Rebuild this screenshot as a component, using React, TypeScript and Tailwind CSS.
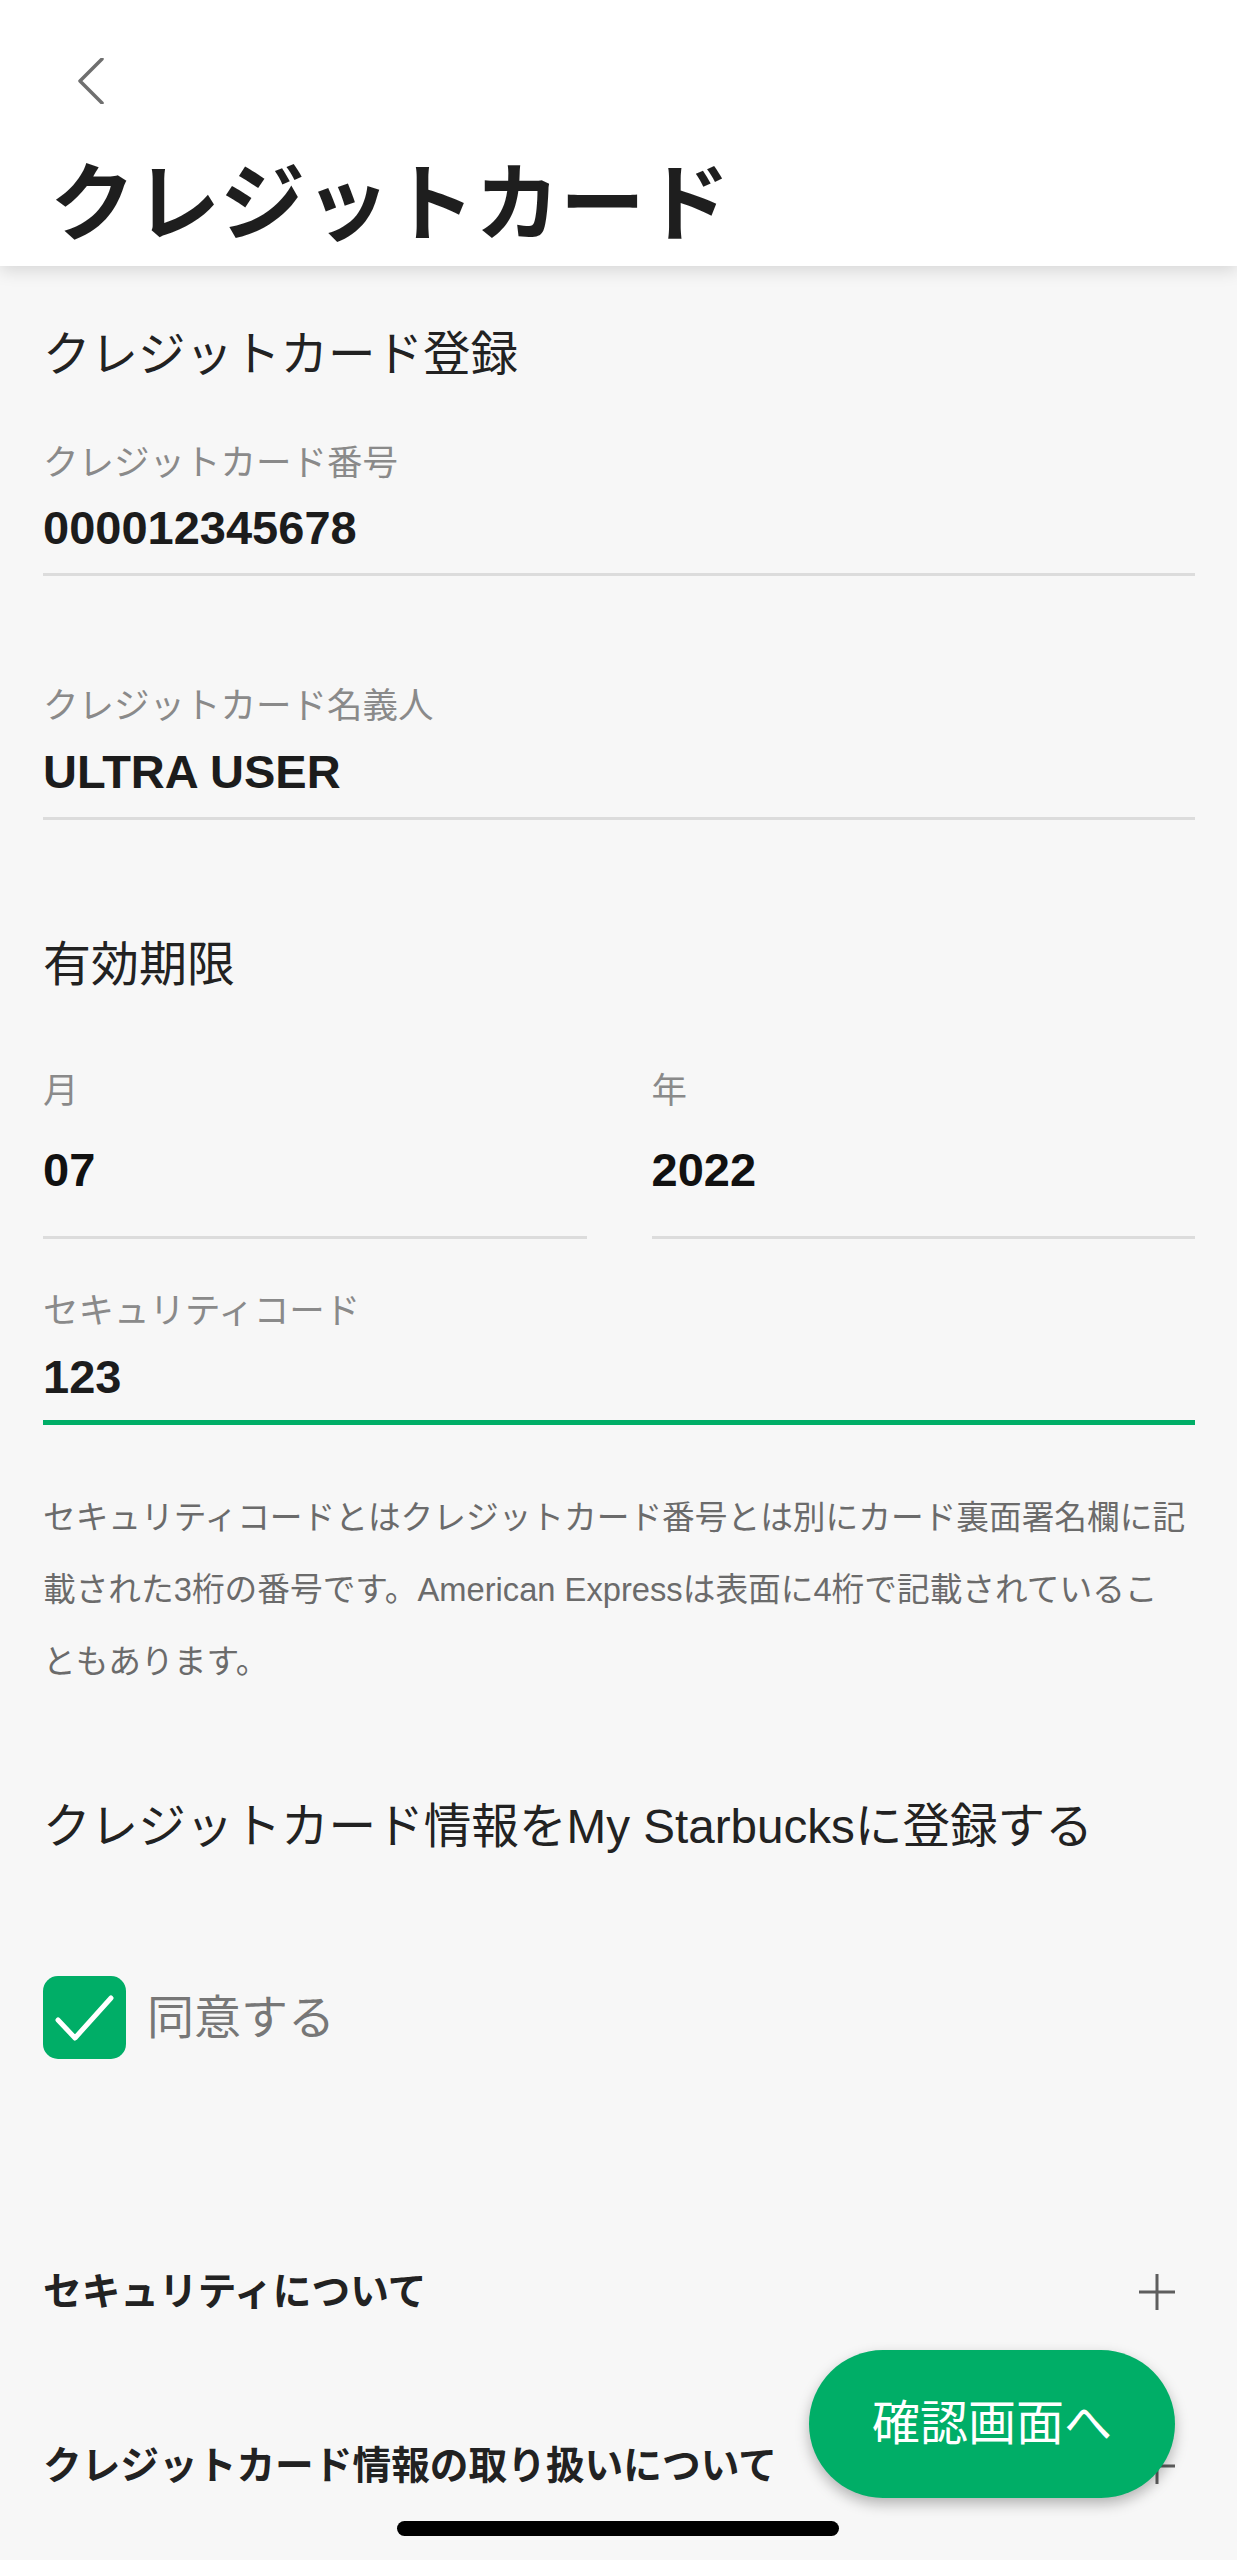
import React from 'react';

const FONT = "font-['Liberation_Sans','Noto_Sans_CJK_JP',sans-serif]";

const Field = ({ label, value, active }: { label: string; value: string; active?: boolean }) => (
  <div className="flex flex-col">
    <div className="text-[35.5px] leading-none text-[#8a8a8a]">{label}</div>
    <div className="mt-[23px] text-[47px] leading-none font-bold text-[#1c1c1c]">{value}</div>
    {active ? (
      <div className="mt-[20px] h-[5px] bg-[#00ae67]" />
    ) : (
      <div className="mt-[22px] h-[3px] bg-[#dcdcdc]" />
    )}
  </div>
);

const Plus = () => (
  <svg width="36" height="36" viewBox="0 0 36 36" className="shrink-0 mr-[20px]">
    <path d="M18 0v36M0 18h36" stroke="#5e5e5e" strokeWidth="3" fill="none" />
  </svg>
);

const App = () => {
  return (
    <div className={`relative min-h-[2560px] w-[1237px] bg-[#f7f7f7] ${FONT}`}>
      {/* Header */}
      <header className="h-[266px] bg-white pl-[50px] pt-[58px] shadow-[0_5px_16px_rgba(0,0,0,0.13)] relative z-10">
        <svg width="26" height="46" viewBox="0 0 26 46" className="ml-[28px]">
          <path d="M24 1L2 23l22 22" stroke="#6f6f6f" strokeWidth="3.5" fill="none" strokeLinecap="round" strokeLinejoin="round" />
        </svg>
        <h1 className="mt-[58px] text-[85px] leading-none font-bold text-[#1e1e1e]">クレジットカード</h1>
      </header>

      <main className="pl-[43px] pr-[42px]">
        <h2 className="mt-[65px] text-[47.5px] leading-none text-[#222]">クレジットカード登録</h2>

        <div className="mt-[67px]">
          <Field label="クレジットカード番号" value="000012345678" />
        </div>
        <div className="mt-[113px]">
          <Field label="クレジットカード名義人" value="ULTRA USER" />
        </div>

        <h3 className="mt-[121px] text-[48px] leading-none text-[#222]">有効期限</h3>
        <div className="mt-[85px] grid grid-cols-2 gap-x-[65px]">
          <div className="flex flex-col">
            <div className="text-[35.5px] leading-none text-[#8a8a8a]">月</div>
            <div className="mt-[37px] text-[47px] leading-none font-bold text-[#111]">07</div>
            <div className="mt-[43px] h-[3px] bg-[#dcdcdc]" />
          </div>
          <div className="flex flex-col">
            <div className="text-[35.5px] leading-none text-[#8a8a8a]">年</div>
            <div className="mt-[37px] text-[47px] leading-none font-bold text-[#111]">2022</div>
            <div className="mt-[43px] h-[3px] bg-[#dcdcdc]" />
          </div>
        </div>

        <div className="mt-[55px]">
          <Field label="セキュリティコード" value="123" active />
        </div>

        <p className="mt-[57px] text-[32.7px] leading-[72px] text-[#6b6b6b] whitespace-nowrap">
          セキュリティコードとはクレジットカード番号とは別にカード裏面署名欄に記
          <br />
          載された3桁の番号です。American Expressは表面に4桁で記載されているこ
          <br />
          ともあります。
        </p>

        <h3 className="mt-[105px] text-[47.6px] leading-none text-[#222]">クレジットカード情報をMy Starbucksに登録する</h3>

        <div className="mt-[126px] flex items-center gap-[21px]">
          <div className="w-[83px] h-[83px] rounded-[15px] bg-[#00ae67] flex items-center justify-center">
            <svg width="83" height="83" viewBox="0 0 83 83">
              <path d="M15 44L32 62L68 22" stroke="#fff" strokeWidth="5" fill="none" strokeLinecap="round" strokeLinejoin="round" />
            </svg>
          </div>
          <span className="text-[47px] leading-none text-[#777]">同意する</span>
        </div>

        <div className="mt-[214px] flex items-center justify-between">
          <span className="text-[38.7px] leading-none font-bold text-[#222]">セキュリティについて</span>
          <Plus />
        </div>
        <div className="mt-[135px] flex items-center justify-between">
          <span className="text-[38.7px] leading-none font-bold text-[#222]">クレジットカード情報の取り扱いについて</span>
          <Plus />
        </div>
      </main>

      {/* Floating button */}
      <button className="absolute left-[809px] top-[2350px] w-[366px] h-[148px] rounded-full bg-[#00ae67] text-white text-[48px] leading-none shadow-[0_6px_14px_rgba(0,0,0,0.28)] flex items-center justify-center">
        確認画面へ
      </button>

      {/* Home indicator */}
      <div className="absolute left-[397px] top-[2521px] w-[442px] h-[15px] rounded-full bg-black" />
    </div>
  );
};

export default App;
